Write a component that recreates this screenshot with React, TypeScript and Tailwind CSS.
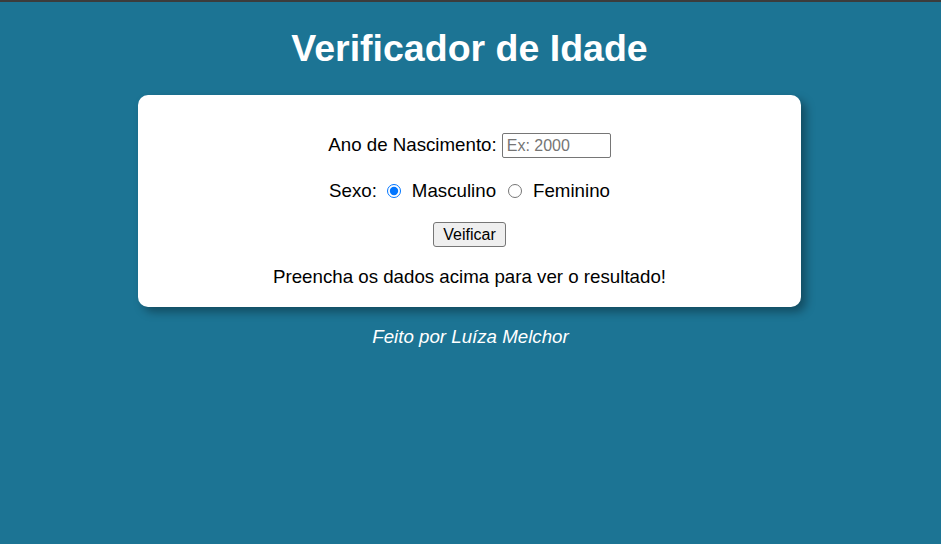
import React from "react";

export default function App() {
  return (
    <div
      className="min-h-[544px] w-full bg-[#1c7494] border-t-2 border-[#3c3c3c] flex flex-col items-center text-black"
      style={{ fontFamily: '"Liberation Sans", Arial, sans-serif' }}
    >
      <h1 className="mt-[26px] mr-[2px] h-[40px] leading-[40px] text-[37.5px] font-bold text-white text-center">
        Verificador de Idade
      </h1>
      <div className="mt-[27px] mr-[2px] w-[663px] h-[212px] bg-white rounded-[10px] shadow-[5px_5px_10px_rgba(0,0,0,0.35)] flex flex-col items-center text-[18.72px] pt-[38px]">
        <div className="flex items-center h-[25px]">
          <span>Ano de Nascimento:</span>
          <input
            type="text"
            placeholder="Ex: 2000"
            className="ml-[5px] w-[109px] h-[25px] border border-[#767676] rounded-[2px] px-[4px] text-[16px] placeholder:text-[#757575] outline-none"
          />
        </div>
        <div className="mt-[21px] flex items-center h-[24px]">
          <span>Sexo:</span>
          <input type="radio" name="sexo" defaultChecked className="ml-[10px] mr-[11px] w-[14px] h-[14px] m-0 accent-[#0075ff]" />
          <span>Masculino</span>
          <input type="radio" name="sexo" className="ml-[12px] mr-[11px] w-[14px] h-[14px] m-0" />
          <span>Feminino</span>
        </div>
        <button className="mt-[19px] w-[73px] h-[25px] bg-[#efefef] border border-[#767676] rounded-[3px] text-[16px] leading-none">
          Veificar
        </button>
        <p className="mt-[19px] h-[22px] leading-[22px]">Preencha os dados acima para ver o resultado!</p>
      </div>
      <p className="mt-[19px] text-[18.72px] italic text-white leading-[22px]">Feito por Luíza Melchor</p>
    </div>
  );
}
